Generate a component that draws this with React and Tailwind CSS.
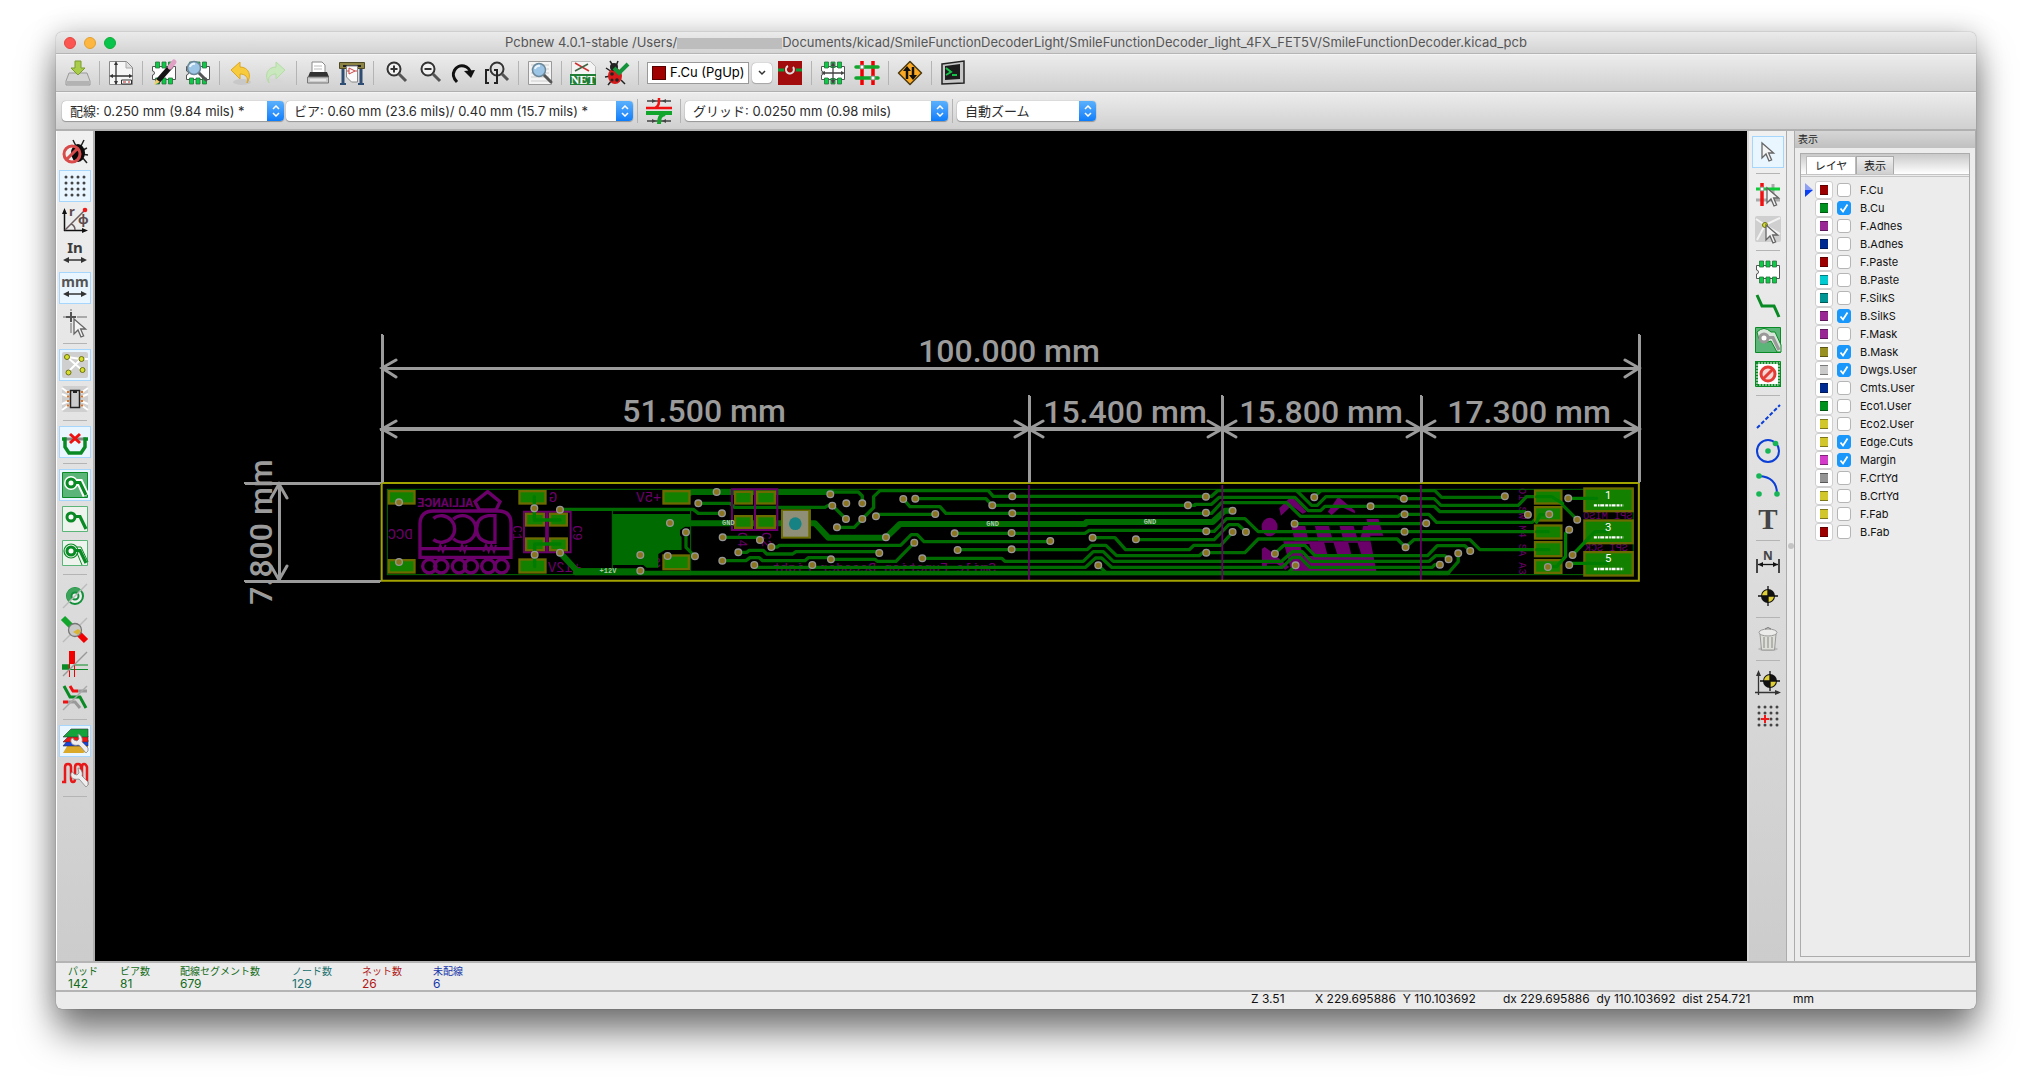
import { useState } from 'react';
import clsx from 'clsx';

const Svg = ({ children }) => (
    <svg className="overflow-visible" width="26" height="26" viewBox="0 0 26 26" fill="none" aria-hidden="true">{children}</svg>
);

const Cursor = ({ x = 0, y = 0 }) => (
    <path d="M0 0v15l4-4 3 7 2.600-1-3-7h5z" transform={`translate(${x} ${y})`} fill="#f4f4f4" stroke="#666" strokeWidth="1.300" />
);

const Target = ({ x, y }) => (
    <g transform={`translate(${x} ${y})`}>
        <circle r="7" fill="#111" />
        <path d="M0 0V-6A6 6 0 0 0-6 0zM0 0V6A6 6 0 0 0 6 0z" fill="#e0cf35" />
        <path d="M0-10V10M-10 0H10" stroke="#111" strokeWidth="1.300" />
    </g>
);

const Chip = () => (
    <g>
        <path d="M1.500 6.500h23v13h-23v-4.500a2 2 0 0 0 0-4z" fill="#fff" stroke="#555" />
        <path d="M4.500 2h4v6h-4zM11 2h4v6h-4zM17.500 2h4v6h-4zM4.500 18h4v6h-4zM11 18h4v6h-4zM17.500 18h4v6h-4z" fill="#0bcb46" stroke="#2c6e3d" strokeWidth=".8" />
    </g>
);

const Wrench = () => (
    <path d="M11 10c-3 0-3 6 1 7 3 1 5-1 6 1l6 7 2-2v-3l-6-6c1-4-1-7-4-8l1 5-2 2-3-1z" fill="#eee" stroke="#888" strokeWidth=".8" />
);

const Lens = ({ children }) => (
    <g stroke="#333" transform="translate(3 0)">
        <circle cx="9" cy="9" r="6.500" strokeWidth="2" fill="#f2f2f2" />
        <path d="M14 14l7 7" strokeWidth="3" stroke="#555" />
        {children}
    </g>
);

const Glass = ({ x, y }) => (
    <g transform={`translate(${x} ${y})`}>
        <path d="M5 5l7 7" stroke="#555" strokeWidth="3" strokeLinecap="round" />
        <circle r="6.500" fill="#9cc5e6" stroke="#6c8798" strokeWidth="1.500" />
        <path d="M-4-1a4 4 0 0 1 5-3" stroke="#e9f6ff" strokeWidth="2" />
    </g>
);

const Pad = ({ color = '#0a8a24', halo }) => (
    <g>
        {halo && <path d="M15 7h4l7 15M15 13l5 12" stroke={halo} strokeWidth="1" />}
        {halo && <circle cx="9" cy="11" r="7" stroke={halo} strokeWidth="1.200" />}
        <circle cx="9" cy="11" r="4" stroke={color} strokeWidth="3" fill="#fff" />
        <path d="M12 10.500h6l6 12.500" stroke={color} strokeWidth="3.200" />
    </g>
);

const icons = {
    save: <Svg><path d="M4 13h18l3 8v4H1v-4z" fill="#d4d4d4" stroke="#999" /><path d="M2 21h22v4H2z" fill="#b3b3b3" /><path d="M10 1h6v7h4l-7 7-7-7h4z" fill="#a9cd48" stroke="#7b9b2c" /></Svg>,
    page: <Svg><path d="M1.500 1.500h17l6 6v17h-23z" fill="#f6f6f6" stroke="#888" /><path d="M18 2v6h6" fill="#ddd" stroke="#aaa" /><path d="M8 3v21M3 16h20" stroke="#333" strokeWidth="1.300" /><path d="M8 1l-2 4h4zM8 25l-2-4h4zM1 16l4-2v4zM25 16l-4-2v4z" fill="#333" /><path d="M13.500 20h10v4h-10z" fill="#fff" stroke="#333" /><path d="M15 22h3m2 0h2" stroke="#b22" /></Svg>,
    editor: <Svg><Chip /><path d="M6 22L21 5" stroke="#151515" strokeWidth="5" /><path d="M19 7l4-5" stroke="#e0a0c4" strokeWidth="5" strokeLinecap="round" /><path d="M3 25l2-6 4 3z" fill="#f0cf6a" /></Svg>,
    viewer: <Svg><Chip /><Glass x={9} y={8} /></Svg>,
    undo: <Svg><ellipse cx="14" cy="22" rx="9" ry="3" fill="#c8c8c8" /><path d="M3 10l9-8v5c9 0 12 9 7 16 2-6-2-9-7-9v5z" fill="#f7cb3c" stroke="#dba623" /></Svg>,
    redo: <Svg><ellipse cx="12" cy="22" rx="9" ry="3" fill="#d6d6d6" /><path d="M23 10l-9-8v5c-9 0-12 9-7 16-2-6 2-9 7-9v5z" fill="#c9e8bd" stroke="#b5dca6" /></Svg>,
    print: <Svg><path d="M7 2h10l3 3v8H7z" fill="#fff" stroke="#888" /><path d="M9 6h8M9 9h8" stroke="#bbb" /><path d="M5 12h17l2 5H3z" fill="#333" /><path d="M2.500 17h21v6h-21z" fill="#ccc" stroke="#777" /><path d="M5 20h16" stroke="#fff" /></Svg>,
    plot: <Svg><path d="M4 8v17M22 8v17" stroke="#2f4d73" strokeWidth="3" /><path d="M1 24h6M19 24h6" stroke="#2f4d73" strokeWidth="2" /><path d="M.5 2.500h25v6H.5z" fill="#8c8445" stroke="#4e4a25" /><path d="M4 6h18" stroke="#222" strokeWidth="2" /><path d="M7.500 6h11v16h-6l-5-5z" fill="#fafafa" stroke="#888" /><path d="M10 8v6l6-3zM8 11h2m6 0h2" stroke="#c44" /></Svg>,
    zoomIn: <Svg><Lens><path d="M5.500 9h7M9 5.500v7" strokeWidth="2" /></Lens></Svg>,
    zoomOut: <Svg><Lens><path d="M5.500 9h7" strokeWidth="2" /></Lens></Svg>,
    redraw: <Svg><path d="M7 22C-1 14 6 4 14 6c4 1 6 4 6 6" stroke="#111" strokeWidth="3" /><path d="M14 11l11-1-4 8z" fill="#111" /></Svg>,
    zoomFit: <Svg><circle cx="13" cy="9" r="6.500" stroke="#333" strokeWidth="2" /><path d="M18 14l6 6" stroke="#555" strokeWidth="3" /><path d="M5 10H2v13h3M10 10h3v13h-3" stroke="#222" strokeWidth="2" /></Svg>,
    find: <Svg><path d="M1.500 1.500h23v23h-23z" fill="#f4f4f4" stroke="#999" /><path d="M4 5h18M4 9h18M4 13h18M4 17h18M4 21h18" stroke="#ccc" /><Glass x={12} y={10} /></Svg>,
    net: <Svg><path d="M1.500 1.500h19l5 5v18h-24z" fill="#f4f4f4" stroke="#bbb" /><path d="M5 3l14 8" stroke="#c33" strokeWidth="1.500" /><path d="M5 11l13-7" stroke="#464" strokeWidth="1.500" /><path d="M0 14h26v11H0z" fill="#1f7d36" /><text x="13" y="24" textAnchor="middle" fontSize="12" fontWeight="700" fill="#fff" fontFamily="Liberation Serif, serif">NET</text></Svg>,
    drc: <Svg><path d="M2 8l6 4M1 17l6-1M4 25l4-5M21 24l-4-4M6 1l3 5M14 1l-2 5" stroke="#222" strokeWidth="1.500" /><ellipse cx="11" cy="16" rx="7" ry="8" fill="#d61a1a" /><circle cx="10" cy="7" r="4" fill="#222" /><circle cx="8" cy="14" r="1.800" fill="#222" /><circle cx="13" cy="20" r="1.800" fill="#222" /><circle cx="8" cy="20" r="1.500" fill="#222" /><path d="M10 8l5 5 9-9" stroke="#13943a" strokeWidth="4" /></Svg>,
    layerPair: <Svg><path d="M1 1h24v24H1z" fill="#a30c0c" /><path d="M1 10h24" stroke="#0b9a35" strokeWidth="3" /><circle cx="13" cy="10" r="6" fill="#a30c0c" /><path d="M16 7a4 4 0 1 1-5-1" stroke="#ddd" strokeWidth="2" /></Svg>,
    modeModule: <Svg><Chip /><path d="M8 8h10v10H8z" fill="#fff" /><path d="M3 13h20M13 4v19" stroke="#444" strokeWidth="1.300" /><path d="M1 13l4-2v4zM25 13l-4-2v4zM13 2l-2 4h4zM13 24l-2-4h4z" fill="#444" /></Svg>,
    modeTrack: <Svg><path d="M8 1v24M19 1v24" stroke="#f00000" strokeWidth="3.500" /><path d="M2 7h22M2 18h22" stroke="#11a52c" strokeWidth="3.500" strokeLinecap="round" /><circle cx="8" cy="7" r="2" fill="#fff" stroke="#999" /><circle cx="19" cy="18" r="2" fill="#fff" stroke="#999" /></Svg>,
    route: <Svg><path d="M13 1.500L24.500 13 13 24.500 1.500 13z" fill="#fba922" stroke="#4b3a14" strokeLinejoin="round" strokeWidth="1.500" /><path d="M10 19V10M16 7v9" stroke="#111" strokeWidth="2.500" /><path d="M10 6l-4 5h8zM16 20l-4-5h8z" fill="#111" /></Svg>,
    script: <Svg><path d="M2 4l22-3v22L2 24z" fill="#c6c6c6" stroke="#222" strokeWidth="1.500" /><path d="M5 6l15-2v15L5 20z" fill="#1c1c1c" /><path d="M6 8l5 4-5 3M12 15h5" stroke="#16c24a" strokeWidth="2" /></Svg>,
    autoTrack: <Svg><path d="M1 3h24M1 23h24" stroke="#444" strokeWidth="1.300" /><path d="M10 3L6 1v4zM16 3l4-2v4zM10 23l-4-2v4zM16 23l4-2v4z" fill="#444" /><path d="M0 10h26M9 10c4-2 4-4 4-10" stroke="#f01010" strokeWidth="2.500" /><path d="M0 15h26M19 16c-5 1-6 4-6 10" stroke="#11a52c" strokeWidth="4" /></Svg>,
    drcOff: <Svg><path d="M11 1l3 6M22 1l-3 6M25 9l-6 3M26 16l-7-1M25 24l-5-6" stroke="#222" strokeWidth="1.500" /><ellipse cx="16" cy="14" rx="7" ry="9" fill="#0a0a0a" /><circle cx="10" cy="15" r="8" stroke="#d94b4b" strokeWidth="3" /><path d="M4.500 20.500L15.500 9.500" stroke="#d94b4b" strokeWidth="3" /></Svg>,
    grid: <Svg>{[4, 10, 16, 22].map((y) => [4, 10, 16, 22].map((x) => <circle key={`${x}-${y}`} cx={x} cy={y} r="1.500" fill="#444" />))}</Svg>,
    polar: <Svg><path d="M2.500 24V5M2 23.500h19" stroke="#111" strokeWidth="1.500" /><path d="M2.500 1L0 7h5zM26 23.500L20 21v5z" fill="#111" /><path d="M3 23L22 4M9 17c3 1 4 3 4 6" stroke="#6b5c60" strokeWidth="1.500" /><circle cx="23" cy="3" r="2.300" fill="#f01818" /><text x="7" y="9" fontSize="13" fontWeight="700" fill="#5b4a4e" fontFamily="Noto Sans, sans-serif">r</text><text x="16" y="17" fontSize="13" fontWeight="700" fill="#5b4a4e" fontFamily="Noto Sans, sans-serif">φ</text></Svg>,
    inch: <Svg><text x="13" y="12" textAnchor="middle" fontSize="15" fontWeight="700" fill="#3c3c3c" fontFamily="Noto Sans, sans-serif">In</text><path d="M4 19h18" stroke="#333" strokeWidth="1.500" /><path d="M1 19l6-3v6zM25 19l-6-3v6z" fill="#333" /></Svg>,
    mm: <Svg><text x="13" y="12" textAnchor="middle" fontSize="14" fontWeight="700" fill="#555" fontFamily="Noto Sans, sans-serif">mm</text><path d="M4 19h18" stroke="#333" strokeWidth="1.500" /><path d="M1 19l6-3v6zM25 19l-6-3v6z" fill="#333" /></Svg>,
    cursorShape: <Svg><path d="M1 8h3M15 8h10M9 0v2M9 14v10" stroke="#aaa" strokeWidth="2" /><path d="M4 8h10M9 3v10" stroke="#555" strokeWidth="2" /><Cursor x={12} y={10} /></Svg>,
    ratsnest: <Svg><rect width="26" height="26" rx="2" fill="#cfcfcf" /><path d="M5 5l15 13M19 7L6 20M19 7h7M5 5l14 2" stroke="#fff" strokeWidth="2" /><g fill="#d6df2b" stroke="#6c7011"><circle cx="5" cy="5" r="2.500" /><circle cx="19.500" cy="7" r="2.500" /><circle cx="20.500" cy="18" r="2.500" /><circle cx="6.500" cy="20.500" r="2.500" /></g></Svg>,
    moduleRats: <Svg><rect width="26" height="26" rx="2" fill="#cfcfcf" /><path d="M0 2l7 5M0 8l7 3M0 18l7-3M0 24l7-5M26 2l-7 5M26 8l-7 3M26 18l-7-3M26 24l-7-5" stroke="#fff" strokeWidth="2" /><path d="M8.500 4.500h9v17h-9z" fill="#ccc" stroke="#222" strokeWidth="1.500" /><path d="M11 4h4v3h-4z" fill="#222" /><path d="M6 5v17M20 5v17" stroke="#e2701d" strokeWidth="2" strokeDasharray="2 2.500" /></Svg>,
    autoDel: <Svg><path d="M2 10h22" stroke="#888" strokeWidth="3" /><path d="M0 10h3v8l4 6h12l4-6v-8h3" stroke="#0a8a24" strokeWidth="3.500" /><path d="M8 5l10 9M18 5L8 14" stroke="#ee1111" strokeWidth="3" /></Svg>,
    zoneFill: <Svg><path d="M.5.5h25v25H.5z" fill="#5cb578" stroke="#0a8a24" /><circle cx="9" cy="11" r="6" stroke="#fff" strokeWidth="2" /><path d="M12 10.500h6l6 13" stroke="#fff" strokeWidth="7" /><Pad /></Svg>,
    zoneNone: <Svg><path d="M.5.5h25v25H.5z" fill="#eef3ee" stroke="#5cb578" /><Pad /></Svg>,
    zoneOutline: <Svg><path d="M.5.5h25v25H.5z" fill="#eef3ee" stroke="#5cb578" /><Pad halo="#0a8a24" /></Svg>,
    viaSketch: <Svg><circle cx="13" cy="13" r="8" stroke="#13903a" strokeWidth="2" fill="#eee" /><path d="M7 19A8 8 0 0 1 19 7z" fill="#3da35a" /><circle cx="13" cy="13" r="3.500" stroke="#13903a" strokeWidth="2" fill="#eee" /><path d="M1 25L25 1" stroke="#bbb" strokeWidth="1.500" /></Svg>,
    padSketch: <Svg><path d="M1 25L25 1" stroke="#bbb" strokeWidth="1.500" /><path d="M1 1l8 8" stroke="#12a52c" strokeWidth="6" /><path d="M16 16l8 8" stroke="#f00000" strokeWidth="6" /><circle cx="13" cy="13" r="6.500" fill="#c9c9c9" stroke="#777" strokeWidth="1.300" /><path d="M11 15l5-3 3 2-3 4z" fill="#d8b437" /></Svg>,
    trackSketch: <Svg><path d="M0 16h8" stroke="#0a8a24" strokeWidth="5.500" /><path d="M12 14h14M6 18.500h20" stroke="#0a8a24" /><path d="M10 0v13" stroke="#f00000" strokeWidth="6" /><path d="M7.500 13v13M12.500 13v13" stroke="#f00000" /><path d="M1 25L25 1" stroke="#999" strokeWidth="1.500" /></Svg>,
    contrast: <Svg><path d="M8 1l3 5h5M1 17h5" stroke="#e11" strokeWidth="3" /><path d="M16 6h9M6 17h7l5 6" stroke="#999" strokeWidth="3" /><path d="M2 1l6 11h10l6 11" stroke="#0a8a24" strokeWidth="3" /><path d="M1 25L25 1" stroke="#aaa" strokeWidth="1.500" /></Svg>,
    layers: <Svg><path d="M7 15h19v8l-5 2H1z" fill="#dba928" /><path d="M6 12h20v6H1z" fill="#1747dd" stroke="#333" strokeWidth=".6" /><path d="M7 8h19v6H1z" fill="#ee1717" stroke="#333" strokeWidth=".6" /><path d="M9 1h17v8H1z" fill="#13a33b" stroke="#333" strokeWidth=".6" /><Wrench /></Svg>,
    microwave: <Svg><path d="M0 20h3V5q0-3 3-3t3 3v12q0 3 2 3t2-3V5q0-3 3-3t3 3v12M20 17V5q0-3 2-3t3 3v18" stroke="#e81818" strokeWidth="2.500" /><Wrench /></Svg>,
    arrow: <Svg><Cursor x={7} y={4} /></Svg>,
    highlight: <Svg><path d="M1 18h24M18 2v10" stroke="#aaa" strokeWidth="3" /><path d="M7 1v23" stroke="#f01010" strokeWidth="3.500" /><path d="M1 7h24" stroke="#0bcb36" strokeWidth="3" /><circle cx="7" cy="7" r="2" fill="#fff" stroke="#999" /><Cursor x={12} y={6} /></Svg>,
    localRats: <Svg><rect width="26" height="26" rx="2" fill="#cfcfcf" /><path d="M10 9L1 3M10 9l15-7M10 9l15 9M10 9L2 24" stroke="#f2f2f2" strokeWidth="2" /><circle cx="10" cy="9" r="2.500" fill="#d6df2b" stroke="#6c7011" /><Cursor x={11} y={9} /></Svg>,
    addModule: <Svg><Chip /></Svg>,
    addTrack: <Svg><path d="M2 2l5 11h12l5 11" stroke="#0a8a24" strokeWidth="3" /></Svg>,
    addZone: <Svg><path d="M.5.5h25v25H.5z" fill="#5cb578" stroke="#0a8a24" /><path d="M2 5q7-7 14 0h4l6 13v7h-4l-6-11q-12 6-14-9z" fill="#d9e6dc" stroke="#0a8a24" /><Pad color="#999" /></Svg>,
    keepout: <Svg><path d="M1.500 1.500h23v23h-23z" stroke="#0a8a24" strokeWidth="3" fill="#fff" strokeDasharray="2 1" /><path d="M.5.5h25v25H.5z" stroke="#0a8a24" /><circle cx="13" cy="13" r="7" stroke="#e33b35" strokeWidth="3" fill="#f6d6d4" /><path d="M8 18L18 8" stroke="#e33b35" strokeWidth="3" /></Svg>,
    line: <Svg><path d="M2 24L25 1" stroke="#0b3fd6" strokeWidth="2" strokeDasharray="4 2" /></Svg>,
    circle: <Svg><circle cx="13" cy="13" r="11" stroke="#0b3fd6" strokeWidth="2" /><circle cx="13" cy="13" r="2.800" fill="#18b556" /><circle cx="20.500" cy="5.500" r="2.800" fill="#18b556" /></Svg>,
    arc: <Svg><path d="M4 4q18 1 18 18" stroke="#0b3fd6" strokeWidth="2" /><circle cx="4" cy="4" r="2.800" fill="#18b556" /><circle cx="4" cy="22" r="2.800" fill="#18b556" /><circle cx="22" cy="22" r="2.800" fill="#18b556" /></Svg>,
    text: <Svg><text x="13" y="23" textAnchor="middle" fontSize="29" fontWeight="700" fill="#454545" fontFamily="Liberation Serif, serif">T</text></Svg>,
    dimension: <Svg><path d="M2 10v14M24 10v14" stroke="#444" strokeWidth="2" /><path d="M3 15.500h20" stroke="#111" strokeWidth="1.300" /><path d="M3 15.500l5-2.500v5zM23 15.500L18 13v5z" fill="#111" /><text x="13" y="11" textAnchor="middle" fontSize="12" fontWeight="700" fill="#444" fontFamily="Noto Sans, sans-serif">N</text></Svg>,
    target: <Svg><Target x={13} y={13} /></Svg>,
    trash: <Svg><ellipse cx="13" cy="23" rx="10" ry="2" fill="#bbb" /><path d="M5 8h16l-1.500 16h-13z" fill="#deded8" stroke="#999" /><path d="M9 11v11M13 11v11M17 11v11" stroke="#a5a5a0" strokeWidth="1.500" /><ellipse cx="13" cy="6.500" rx="9" ry="3.500" fill="#ececea" stroke="#999" /><path d="M10 3q3-3 6 0" stroke="#777" /></Svg>,
    origin: <Svg><path d="M3.500 26V4M0 23.500h22" stroke="#333" strokeWidth="1.300" /><path d="M3.500 1L1 7h5zM26 23.500L20 21v5z" fill="#333" /><Target x={15} y={12} /></Svg>,
    gridOrigin: <Svg>{[4, 10, 16, 22].map((y) => [4, 10, 16, 22].map((x) => <circle key={`${x}-${y}`} cx={x} cy={y} r="1.500" fill="#444" />))}<path d="M10 12v8M6 16h8" stroke="#f01818" strokeWidth="2" /></Svg>,
};

const topBar = ['save', '|', 'page', '|', 'editor', 'viewer', '|', 'undo', 'redo', '|', 'print', 'plot', '|', 'zoomIn', 'zoomOut', 'redraw', 'zoomFit', '|', 'find', '|', 'net', 'drc', '|'];
const topBarEnd = ['layerPair', '|', 'modeModule', 'modeTrack', '|', 'route', '|', 'script'];
const leftBar = ['drcOff', 'grid', 'polar', 'inch', 'mm', 'cursorShape', '|', 'ratsnest', 'moduleRats', '|', 'autoDel', '|', 'zoneFill', 'zoneNone', 'zoneOutline', '|', 'viaSketch', 'padSketch', 'trackSketch', 'contrast', '|', 'layers', 'microwave', '|'];
const rightBar = ['arrow', '|', 'highlight', 'localRats', '|', 'addModule', 'addTrack', 'addZone', 'keepout', '|', 'line', 'circle', 'arc', 'text', '|', 'dimension', 'target', '|', 'trash', '|', 'origin', 'gridOrigin'];
const pressed = ['grid', 'mm', 'ratsnest', 'autoDel', 'zoneFill', 'layers', 'arrow'];

const Tools = ({ items, vertical }) => items.map((name, i) => (
    name === '|' ? (
        <div key={i} className={clsx('flex shrink-0 items-center justify-center', vertical ? 'h-[9px] w-8' : 'h-8 w-[9px]')}>
            <div className={clsx('bg-[#b4b4b4]', vertical ? 'h-px w-6' : 'h-6 w-px')} />
        </div>
    ) : (
        <button
            key={i}
            type="button"
            aria-label={name}
            className={clsx(
                'flex size-8 shrink-0 items-center justify-center border',
                vertical ? 'my-px' : 'mx-px',
                pressed.includes(name) ? 'border-[#a6d6fb] bg-[#e9f5ff]' : 'border-transparent'
            )}
        >
            {icons[name]}
        </button>
    )
));

const Divider = () => <div className="mx-1 h-6 w-px bg-[#b4b4b4]" />;

const Combo = ({ label, value, className }) => (
    <div className={clsx('flex h-5 overflow-hidden rounded bg-white shadow-[0_0_1px_#777,0_1px_1px_#999]', className)}>
        <select aria-label={label} className="min-w-0 flex-1 appearance-none pl-2 text-[13px] leading-5 text-[#2c2c2c] outline-none">
            <option>{value}</option>
        </select>
        <span className="flex w-[17px] items-center justify-center bg-linear-to-b from-[#59b0fb] to-[#0a7dfb]">
            <svg width="8" height="12" viewBox="0 0 8 12" fill="none" stroke="#fff" strokeWidth="1.500"><path d="M1 4l3-3 3 3M1 8l3 3 3-3" /></svg>
        </span>
    </div>
);

// ---- board drawing ----

const tracks = [
    'M570 118H970L985 130H1056', 'M948 187V232L975 259', 'M570 248L622 300H820', 'M990 100H1080L1093 112H1365L1375 106H1387L1428 147',
    'M1385 66H1465L1477 78V100', 'M1058 202H1170V210', 'M1204 231H1222L1228 226H1592L1624 194H1642L1662 215H2040',
    'M1105 247H1130L1138 241H1180L1190 252H1268L1278 245H1528', 'M1057 272H1128L1140 263H1168L1178 272H1305L1315 263H1383V268H1515L1522 274H1578L1633 218',
    'M1155 292H2147L2177 264H2195L2225 292H2737L2768 262H2790L2820 292H3187L3195 284H3210',
    'M1401 172H1453L1477 147L1511 113V80L1530 62H1855L1870 79H2525L2543 62H3195L3215 82H3405', 'M1518 133H1696',
    'M1600 87L1620 110H1710L1728 130H2525L2555 98H2750L2792 139H3085L3092 133H3177L3200 157H3487L3510 134H3538',
    'M1636 86H1848L1867 106H2475V103H2525L2548 82H2775L2815 122H2852L2865 109H3193L3210 125H3465',
    'M1754 190H2145L2158 181H2490L2509 184H2533L2570 146H2625L2665 185H3535',
    'M1763 239H2152L2165 226H2208L2240 257H2488L2498 248H2625L2665 207H3082L3107 232L3132 209H3300L3330 239H3537',
    'M1657 265H1895L1905 274H2140L2170 245H2200L2230 274H2735L2767 245H2797L2825 274H3178L3197 257H3225L3236 267',
    'M2168 203H2235L2267 239H2458L2472 226H2552L2588 187', 'M2298 209H2533L2577 164H2605L2628 185',
    'M2715 250L2742 226H2805L2835 257H3173L3202 227H3285L3300 243', 'M2780 62L2825 106H2842L2868 80H3082L3090 86H3193L3213 106H3445L3470 80H3545L3565 92L3622 149',
    'M2833 82L2853 62', 'M2774 161H3169', 'M2185 286L2205 305', 'M2777 286L2758 305', 'M3235 309L3265 275V250',
];
const wideTracks = ['M940 78L965 66H1385', 'M950 160H1335L1375 203H1548L1590 162H2145L2150 156H2528L2565 122H2588', 'M570 248L622 304H720'];
const padTracks = [
    'M3595 85H3680', 'M3598 179L3587 190V260L3560 290H3535', 'M3608 255L3675 185H3710', 'M3598 280H3710', 'M493 80V150M494 225V290',
    'M3535 185H3500', 'M3500 239H3537', 'M3500 157L3510 134H3538', 'M3500 80H3545L3578 100', 'M495 150H570M495 222H570',
];

const vias = [
    [87, 97], [87, 276], [493, 115], [570, 119], [494, 254], [570, 248], [985, 100], [900, 159], [948, 187], [975, 259], [811, 255], [893, 258], [811, 302],
    [1040, 66], [1056, 130], [1058, 202], [1170, 210], [1204, 231], [1105, 247], [1057, 272], [1153, 285], [1327, 285], [1381, 73], [1387, 107], [1429, 100],
    [1477, 100], [1428, 147], [1477, 147], [1401, 172], [1518, 139], [1548, 202], [1600, 87], [1636, 86], [1696, 132], [1633, 218], [1528, 249], [1383, 268],
    [1657, 265], [1754, 190], [1763, 240], [1927, 79], [1867, 106], [1927, 130], [1925, 189], [1925, 238], [2508, 80], [2454, 106], [2508, 128], [2588, 122],
    [2509, 184], [2588, 186], [2628, 186], [2298, 208], [2168, 203], [2041, 213], [2185, 286], [2509, 248], [2715, 251], [2777, 286], [2774, 161], [2833, 82],
    [3102, 86], [3002, 109], [3405, 79], [3104, 133], [3169, 160], [3104, 185], [3107, 232], [3301, 243], [3265, 250], [3236, 268], [3210, 284], [3474, 134],
    [3538, 133], [3595, 85], [3622, 149], [3598, 179], [3608, 255], [3598, 285], [3534, 291],
];

const pads = [
    [53, 60, 84, 44], [53, 267, 84, 44], [445, 60, 85, 44], [445, 265, 85, 46], [877, 60, 85, 44], [877, 253, 83, 48],
    [465, 128, 60, 42], [537, 128, 57, 42], [465, 202, 60, 42], [537, 202, 57, 42],
    [1092, 62, 57, 42], [1158, 62, 60, 42], [1092, 135, 57, 42], [1158, 135, 60, 42],
    [3492, 58, 86, 46], [3492, 108, 86, 47], [3492, 163, 86, 46], [3492, 213, 86, 49], [3492, 267, 86, 45],
    [3640, 52, 152, 75], [3640, 148, 152, 75], [3640, 243, 152, 77],
];

// back silkscreen text is mirrored: [x of the right end, baseline, size, text]
const silkTexts = [
    [128, 206, 42, 'DCC'], [562, 95, 42, 'G'], [874, 95, 42, '+5V'], [634, 305, 42, '+12V'], [872, 290, 36, 'S'],
    [3788, 148, 31, 'SPI MISO'], [3774, 243, 31, 'SPI SCK'], [3732, 84, 42, '1'], [3730, 273, 42, 'R'], [3730, 310, 42, '5'],
    [1878, 306, 40, 'Smile Function Decoder Light'],
];

const Board = () => (
    <svg className="size-full" viewBox="95 131 1652 830" role="img" aria-label="PCB">
        {/* board, in thirds of a pixel */}
        <g transform="translate(370 470) scale(.3333)" fill="none">
            <g fill="#6b006b">
                <path d="M2728 115l37-37 45 47-12 6-33-24-32 30zM2874 125l31-45 50 42v8l-42-20-28 26z" />
                <ellipse cx="2699" cy="171" rx="24" ry="28" />
                <path d="M2676 292v-55l8-6 14 10 60 50-12 8-25-18h-30v11z" />
                <path d="M2764 168h42l10 45h-42zM2835 168h42l12 45h-44zM2909 168h42l14 45h-44zM2990 147h36l14 50h-40z" />
                <path d="M2740 214h262l18 91h-255z" />
                <path d="M3000 168h-20l-10 45h32z" />
            </g>
            <path d="M2790 222h28l12 36h-30zM2863 218h28l12 38h-30zM2935 218h28l12 38h-30z" fill="#000" />
            <g fill="#6b006b" fontFamily="Liberation Mono, monospace">
                {silkTexts.map(([x, y, size, t]) => (
                    <text key={t} transform={`translate(${x} ${y}) scale(-1 1)`} fontSize={size}>{t}</text>
                ))}
                <text transform="translate(310 112) scale(-1 1)" fontSize="36" fontWeight="700" fontFamily="Liberation Sans Narrow, Roboto, sans-serif">ALLIANCE</text>
                <text transform="translate(430 166) rotate(90)" fontSize="38">C1</text>
                <text transform="translate(610 166) rotate(90)" fontSize="38">C9</text>
                <text transform="translate(1104 186) rotate(90)" fontSize="38">C4</text>
                <text transform="translate(1176 186) rotate(90)" fontSize="38">C2</text>
                <text transform="translate(3446 54) rotate(90)" fontSize="31">O1 SW M4 SA A3</text>
            </g>
            <rect x="52" y="58" width="3738" height="256" stroke="#006b00" strokeWidth="3" />
            <rect x="727" y="122" width="235" height="192" stroke="#006b00" strokeWidth="3" />
            <path d="M727 132H962V170L945 170L930 180V195L935 202V240H885L865 252V293H830L820 285H727Z" fill="#006b00" />
            <g stroke="#006b00" strokeWidth="10" strokeLinejoin="round" strokeLinecap="round">
                {tracks.map((d) => <path key={d} d={d} />)}
                {wideTracks.map((d) => <path key={d} d={d} strokeWidth="18" />)}
                <path d="M615 309H3235" strokeWidth="13" />
            </g>

            {/* silkscreen */}
            <g stroke="#6b006b" strokeWidth="6">
                <path d="M462 125H602V247H462ZM1086 58H1222V180H1086ZM1155 58V180" />
                <path d="M531 125V247" strokeWidth="11" />
                <path d="M1977 45V332M2557 45V332M3153 45V332" strokeWidth="5" />
                <g strokeWidth="10">
                    <path d="M150 262V160Q152 123 190 123H385Q423 123 423 160V262ZM150 236H423" />
                    <path d="M353 65L390 95L378 120H328L315 95Z" />
                    <path d="M190 145A40 40 0 1 1 190 209M250 148A40 40 0 1 1 250 206M375 137V217H355Q320 210 320 177Q320 142 355 137Z" />
                    <path d="M205 245l6-20 8 20 8-20M270 245l6-20 8 20 6-20M340 245l8-20 8 20 8-20 8 20 6-20" strokeWidth="6" />
                    {[178, 214, 267, 303, 355, 395].map((x) => <circle key={x} cx={x} cy="289" r="20" />)}
                </g>
            </g>

            {/* pads */}
            {pads.map(([x, y, w, h]) => (
                <g key={`${x}-${y}`}>
                    <rect x={x} y={y} width={w} height={h} fill="#6b6b00" />
                    <rect x={x + 7} y={y + 7} width={w - 14} height={h - 14} fill="#138000" />
                </g>
            ))}
            <g stroke="#007c00" strokeWidth="10" strokeLinejoin="round" strokeLinecap="round">
                {padTracks.map((d) => <path key={d} d={d} />)}
            </g>
            <path d="M1233 118h90v88h-90z" fill="#6b6b00" />
            <path d="M1239 123h76v77h-76z" fill="#8f8f78" />
            <circle cx="1276" cy="161" r="19" fill="#168284" />
            <g fill="#8b7420" stroke="#969696" strokeWidth="4">
                {vias.map(([x, y]) => <circle key={`${x}-${y}`} cx={x} cy={y} r="10" />)}
            </g>
            <g fill="#a9c9a9" fontFamily="Liberation Mono, monospace" fontSize="21" fontWeight="700" textAnchor="middle">
                <text x="714" y="309">+12V</text>
                <text x="1075" y="166">GND</text>
                <text x="1868" y="167">GND</text>
                <text x="2340" y="163">GND</text>
            </g>
            <g fill="#fff" fontFamily="Roboto, sans-serif" fontSize="34" textAnchor="middle">
                <text x="3715" y="88">1</text>
                <text x="3715" y="182">3</text>
                <text x="3715" y="277">5</text>
            </g>
            <path d="M3672 106h88M3672 202h88M3672 297h88" stroke="#fff" strokeWidth="7" strokeDasharray="9 3 5 2 12 3" />
            <path d="M35 39H3807V332H35Z" stroke="#a3a300" strokeWidth="6" />
        </g>

        {/* dimensions */}
        <g stroke="#9b9b9b" strokeWidth="3" fill="none" strokeLinecap="round">
            <g shapeRendering="crispEdges">
                <path d="M382 335V482M1639 335V482M1029 396V482M1222 396V482M1421 396V482" />
                <path d="M382 368H1639M245 483H380M245 581H380M279 484V580" />
                <path d="M382 429H1639" strokeWidth="4" />
            </g>
            <path d="M396 360L382 368L396 377M1625 360L1639 368L1625 377M396 421L382 429L396 437M1625 421L1639 429L1625 437" />
            {[1029, 1222, 1421].map((x) => (
                <path key={x} d={`M${x - 14} 421L${x} 429L${x - 14} 437M${x + 14} 421L${x} 429L${x + 14} 437`} />
            ))}
            <path d="M271 498L279 484L287 498M271 566L279 580L287 566" />
        </g>
        <g fill="#9b9b9b" fontFamily="Roboto, sans-serif" fontSize="32" fontWeight="500" textAnchor="middle">
            <text x="1009" y="362">100.000 mm</text>
            <text x="704" y="422">51.500 mm</text>
            <text x="1125" y="423">15.400 mm</text>
            <text x="1321" y="423">15.800 mm</text>
            <text x="1529" y="423">17.300 mm</text>
            <text transform="translate(272 532) rotate(-90)">7.800 mm</text>
        </g>
    </svg>
);

const layers = [
    { name: 'F.Cu', color: 'bg-[#9b0000]', on: false },
    { name: 'B.Cu', color: 'bg-[#009020]', on: true },
    { name: 'F.Adhes', color: 'bg-[#992894]', on: false },
    { name: 'B.Adhes', color: 'bg-[#002a90]', on: false },
    { name: 'F.Paste', color: 'bg-[#9b0000]', on: false },
    { name: 'B.Paste', color: 'bg-[#00cbd0]', on: false },
    { name: 'F.SilkS', color: 'bg-[#009494]', on: false },
    { name: 'B.SilkS', color: 'bg-[#992894]', on: true },
    { name: 'F.Mask', color: 'bg-[#992894]', on: false },
    { name: 'B.Mask', color: 'bg-[#989020]', on: true },
    { name: 'Dwgs.User', color: 'bg-[#cacaca]', on: true },
    { name: 'Cmts.User', color: 'bg-[#002a90]', on: false },
    { name: 'Eco1.User', color: 'bg-[#009020]', on: false },
    { name: 'Eco2.User', color: 'bg-[#d1c72d]', on: false },
    { name: 'Edge.Cuts', color: 'bg-[#d1c72d]', on: true },
    { name: 'Margin', color: 'bg-[#d43bc9]', on: true },
    { name: 'F.CrtYd', color: 'bg-[#949494]', on: false },
    { name: 'B.CrtYd', color: 'bg-[#d1c72d]', on: false },
    { name: 'F.Fab', color: 'bg-[#d1c72d]', on: false },
    { name: 'B.Fab', color: 'bg-[#9b0000]', on: false },
];

const LayerPanel = () => {
    const [visible, setVisible] = useState(layers.map((l) => l.on));
    const toggle = (i) => setVisible(visible.map((v, n) => (n === i ? !v : v)));

    return (
        <aside className="flex w-[182px] shrink-0 flex-col border-r border-l border-[#acacac] bg-[#ececec]">
            <h2 className="h-[17px] bg-linear-to-b from-[#d6d6d6] to-[#c0c0c0] pl-[3px] text-[10px] leading-[17px] text-[#222]">表示</h2>
            <div className="mx-[5px] mt-[5px] mb-1 flex-1 border border-[#acacac]">
                <div className="flex h-[21px] items-end border-b border-[#c4c4c4] bg-linear-to-b from-[#c9c9c9] to-white pl-[5px]" role="tablist">
                    <button type="button" role="tab" aria-selected="true" className="h-[18px] w-[50px] border border-b-0 border-[#bbb] bg-white text-[11px] leading-4 text-[#222]">レイヤ</button>
                    <button type="button" role="tab" aria-selected="false" className="h-[18px] w-[38px] border border-b-0 border-[#a9a9a9] bg-linear-to-b from-[#f0f0f0] to-[#cfcfcf] text-[11px] leading-4 text-[#222]">表示</button>
                </div>
                <ul className="mt-px border-t border-[#c4c4c4] pt-1">
                    {layers.map((layer, i) => (
                        <li key={layer.name} className="flex h-[18px] items-center pl-1">
                            <span className="flex w-[10px] items-center">
                                {i === 0 && (
                                    <svg width="8" height="14" viewBox="0 0 8 14"><path d="M0 0l8 7H0z" fill="#8d9ef5" /><path d="M0 14l8-7H0z" fill="#0b3ff2" /></svg>
                                )}
                            </span>
                            <button type="button" aria-label={`${layer.name} color`} className="flex h-[18px] w-[18px] items-center justify-center rounded-[3px] border border-[#cfcfcf] bg-white">
                                <span className={clsx('h-[10px] w-2 border-y border-black/40', layer.color)} />
                            </button>
                            <span className="ml-1 grid size-[14px] place-items-center">
                                <input
                                    id={`layer-${i}`}
                                    type="checkbox"
                                    checked={visible[i]}
                                    onChange={() => toggle(i)}
                                    className="col-start-1 row-start-1 size-[14px] appearance-none rounded-[3px] border border-[#b5b5b5] bg-white checked:border-[#1a97fb] checked:bg-[#1a97fb]"
                                />
                                {visible[i] && (
                                    <svg className="pointer-events-none col-start-1 row-start-1" width="10" height="10" viewBox="0 0 10 10" fill="none" stroke="#fff" strokeWidth="1.800"><path d="M1.500 5.500l2.500 3 4.500-7" /></svg>
                                )}
                            </span>
                            <label htmlFor={`layer-${i}`} className="pl-[9px] text-[11px] leading-[18px] text-[#111]">{layer.name}</label>
                        </li>
                    ))}
                </ul>
            </div>
        </aside>
    );
};

const stats = [
    { label: 'パッド', value: 142, className: 'w-[52px] text-[#136b20]' },
    { label: 'ビア数', value: 81, className: 'w-[60px] text-[#136b20]' },
    { label: '配線セグメント数', value: 679, className: 'w-[112px] text-[#136b20]' },
    { label: 'ノード数', value: 129, className: 'w-[70px] text-[#1a7070]' },
    { label: 'ネット数', value: 26, className: 'w-[71px] text-[#b01818]' },
    { label: '未配線', value: 6, className: 'w-[60px] text-[#1838a8]' },
];

const App = () => (
    <div className="flex h-screen flex-col bg-white px-14 pt-8 pb-20 font-['Inter','Noto_Sans_CJK_JP',sans-serif]">
        <div className="flex min-h-0 flex-1 flex-col overflow-hidden rounded-md bg-[#ececec] shadow-[0_24px_36px_rgba(0,0,0,0.5),0_0_28px_rgba(0,0,0,0.2),0_0_1px_#666]">

            {/* title bar */}
            <header className="flex h-[22px] shrink-0 items-center border-b border-[#b5b5b5] bg-linear-to-b from-[#ebebeb] to-[#d3d3d3] px-2">
                <div className="flex w-[52px] gap-2">
                    <button type="button" aria-label="close" className="size-3 rounded-full border border-[#e2463f] bg-[#fc5652]" />
                    <button type="button" aria-label="minimize" className="size-3 rounded-full border border-[#e0a030] bg-[#fdb63f]" />
                    <button type="button" aria-label="zoom" className="size-3 rounded-full border border-[#12ac38] bg-[#08c44c]" />
                </div>
                <h1 className="flex flex-1 items-center justify-center pt-px pr-[52px] text-[13px] whitespace-nowrap text-[#555]">
                    Pcbnew 4.0.1-stable /Users/
                    <span className="h-[11px] w-[105px] bg-[#bdbdbd]" />
                    Documents/kicad/SmileFunctionDecoderLight/SmileFunctionDecoder_light_4FX_FET5V/SmileFunctionDecoder.kicad_pcb
                </h1>
            </header>

            {/* toolbars */}
            <div className="flex h-[38px] shrink-0 items-center border-t border-b border-t-[#f4f4f4] border-b-[#b0b0b0] bg-linear-to-b from-[#ececec] to-[#d0d0d0] pl-[5px]">
                <Tools items={topBar} />
                <div className="ml-1 flex h-[22px] w-[102px] items-center border border-[#999] bg-white pl-1">
                    <span className="size-[14px] shrink-0 border border-[#500] bg-[#a00000]" />
                    <select aria-label="layer" className="min-w-0 flex-1 appearance-none pl-1 text-[13px] text-black outline-none">
                        <option>F.Cu (PgUp)</option>
                    </select>
                </div>
                <button type="button" aria-label="choose layer" className="mr-px ml-[3px] flex h-5 w-5 items-center justify-center rounded bg-white shadow-[0_0_1px_#777,0_1px_1px_#aaa]">
                    <svg width="8" height="6" viewBox="0 0 8 6" fill="none" stroke="#333" strokeWidth="1.500"><path d="M1 1l3 3 3-3" /></svg>
                </button>
                <Tools items={topBarEnd} />
            </div>
            <div className="flex h-[39px] shrink-0 items-center border-t border-b-2 border-t-[#f4f4f4] border-b-[#b0b0b0] bg-linear-to-b from-[#ececec] to-[#d0d0d0] pl-[6px]">
                <Combo label="track" value="配線: 0.250 mm (9.84 mils) *" className="w-[222px]" />
                <Combo label="via" value="ビア: 0.60 mm (23.6 mils)/ 0.40 mm (15.7 mils) *" className="ml-0.5 w-[347px]" />
                <Divider />
                <Tools items={['autoTrack']} />
                <Divider />
                <Combo label="grid" value="グリッド: 0.0250 mm (0.98 mils)" className="w-[263px]" />
                <Divider />
                <Combo label="zoom" value="自動ズーム" className="w-[139px]" />
            </div>

            <main className="flex min-h-0 flex-1">
                <nav className="flex w-[39px] shrink-0 flex-col items-center border-r-2 border-l border-r-[#b0b0b0] border-l-white bg-linear-to-b from-[#f0f0f0] to-[#cccccc] pt-1">
                    <Tools items={leftBar} vertical />
                </nav>
                <div className="min-w-0 flex-1 bg-black">
                    <Board />
                </div>
                <nav className="flex w-10 shrink-0 flex-col items-center border-r border-l-2 border-r-[#acacac] border-l-[#d8d8d8] bg-linear-to-b from-[#f0f0f0] to-[#cccccc] pt-1">
                    <Tools items={rightBar} vertical />
                </nav>
                <div className="flex w-[7px] shrink-0 items-center justify-center bg-[#ececec]">
                    <span className="size-[6px] rounded-full bg-[#c4c4c4]" />
                </div>
                <LayerPanel />
            </main>

            {/* board statistics */}
            <dl className="flex h-[31px] shrink-0 border-y-2 border-[#b4b4b4] bg-[#ececec] pt-px pl-3">
                {stats.map((s) => (
                    <div key={s.label} className={clsx('whitespace-nowrap', s.className)}>
                        <dt className="text-[10px] leading-[14px]">{s.label}</dt>
                        <dd className="text-[12px] leading-[12px]">{s.value}</dd>
                    </div>
                ))}
            </dl>
            <footer className="flex h-[17px] shrink-0 justify-end text-[12px] leading-[14px] whitespace-nowrap text-[#111]">
                <span className="w-16">Z 3.51</span>
                <span className="w-[188px]">X 229.695886&nbsp; Y 110.103692</span>
                <span className="w-[290px]">dx 229.695886&nbsp; dy 110.103692&nbsp; dist 254.721</span>
                <span className="w-[183px]">mm</span>
            </footer>
        </div>
    </div>
);

export default App;
